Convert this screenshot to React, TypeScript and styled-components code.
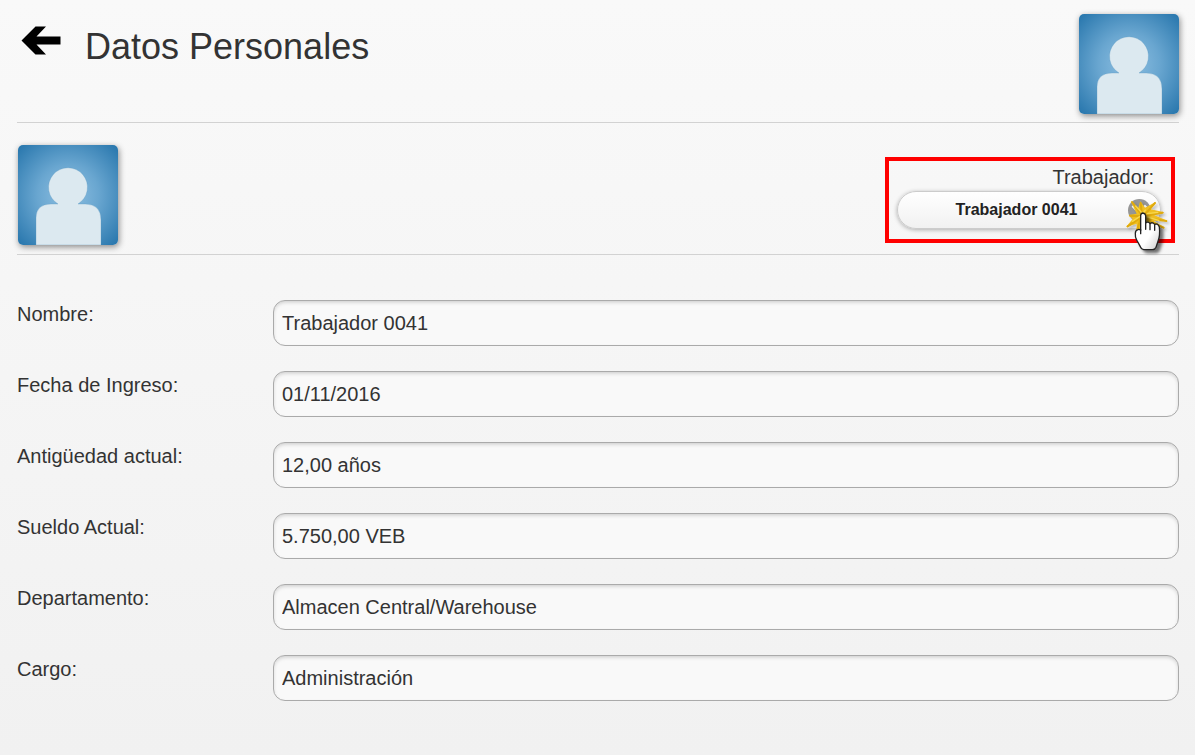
import React from "react";
import styled, { createGlobalStyle } from "styled-components";

const GlobalStyle = createGlobalStyle`
  * { box-sizing: border-box; }
  html { min-height: 100%; }
  body {
    margin: 0;
    min-height: 100vh;
    color: #333;
    background: linear-gradient(#f9f9f9, #f1f1f1);
    font: 20px/24px "Liberation Sans", Arial, sans-serif;
  }
`;

const Page = styled.main`
  padding: 14px 16px 24px 17px;
`;

const Header = styled.header`
  display: flex;
  align-items: flex-start;
  padding-bottom: 8px;
  border-bottom: 1px solid #d2d2d2;
`;

const BackButton = styled.button`
  display: flex;
  width: 68px;
  padding: 12px 0 0 4px;
  border: 0;
  background: none;
  cursor: pointer;
`;

const Title = styled.h1`
  flex: 1;
  margin: 12px 0 0;
  font-size: 36px;
  line-height: 42px;
  font-weight: normal;
`;

const AvatarSvg = styled.svg`
  display: block;
  flex: none;
  width: 100px;
  height: 100px;
  border-radius: 5px;
  box-shadow: 1px 2px 6px rgba(0, 0, 0, 0.45);
`;

const WorkerBar = styled.section`
  display: flex;
  justify-content: space-between;
  align-items: flex-start;
  padding: 12px 4px 9px 1px;
  border-bottom: 1px solid #d2d2d2;

  > ${AvatarSvg} {
    margin-top: 10px;
  }
`;

const WorkerPicker = styled.div`
  display: flex;
  flex-direction: column;
  width: 290px;
  margin-top: 22px;
  padding: 4px 10px 10px 8px;
  border: 4px solid #f00;
`;

const PickerLabel = styled.label`
  padding-right: 7px;
  text-align: right;
`;

const SelectWrap = styled.div`
  position: relative;
  display: flex;
  margin-top: 2px;
`;

const Select = styled.select`
  appearance: none;
  width: 100%;
  height: 38px;
  padding: 0 25px 0 0;
  border: 1px solid #ccc;
  border-radius: 19px;
  background: linear-gradient(#fff, #f1f1f1);
  box-shadow: 0 1px 4px rgba(0, 0, 0, 0.3);
  color: #222;
  font: bold 16px/20px "Liberation Sans", Arial, sans-serif;
  text-align: center;
  text-align-last: center;
`;

const Pointer = styled.svg`
  position: absolute;
  top: -6px;
  right: -19px;
  width: 70px;
  height: 75px;
  pointer-events: none;
`;

const Form = styled.form`
  display: flex;
  flex-direction: column;
  gap: 25px;
  margin-top: 45px;
`;

const Row = styled.div`
  display: flex;
  align-items: flex-start;
`;

const FieldLabel = styled.label`
  flex: none;
  width: 256px;
  padding-top: 2px;
`;

const Field = styled.input`
  flex: 1;
  min-width: 0;
  height: 46px;
  padding: 0 8px;
  border: 1px solid #aaa;
  border-radius: 12px;
  outline: 0;
  background: #f9f9f9;
  box-shadow: inset 0 2px 4px -1px rgba(0, 0, 0, 0.2);
  color: #333;
  font: inherit;
`;

function Avatar({ id }: { id: string }) {
  return (
    <AvatarSvg viewBox="0 0 100 100" role="img" aria-label="Foto del trabajador">
      <defs>
        <radialGradient id={id} cx="50%" cy="50%" r="68%">
          <stop offset="0" stopColor="#8fc0e2" />
          <stop offset="0.45" stopColor="#69a6d0" />
          <stop offset="1" stopColor="#2a78ae" />
        </radialGradient>
      </defs>
      <rect width="100" height="100" fill={`url(#${id})`} />
      <path
        d="M18 100V73Q18 59 33 59H40A19.5 19.5 0 1 1 60 59H67Q83 59 83 75V100Z"
        fill="#dce9f0"
        stroke="#5c98c0"
        strokeOpacity="0.5"
        strokeWidth="0.6"
      />
    </AvatarSvg>
  );
}

function ClickPointer() {
  return (
    <Pointer viewBox="0 0 210 225" aria-hidden="true">
      <defs>
        <filter id="handShadow" x="-30%" y="-30%" width="180%" height="180%">
          <feDropShadow dx="10" dy="9" stdDeviation="5" floodOpacity="0.55" />
        </filter>
        <filter id="burstShadow" x="-30%" y="-30%" width="180%" height="180%">
          <feDropShadow dx="6" dy="6" stdDeviation="4" floodOpacity="0.25" />
        </filter>
        <linearGradient id="handFill" x1="0" y1="0" x2="1" y2="1">
          <stop offset="0.6" stopColor="#fff" />
          <stop offset="1" stopColor="#ccc" />
        </linearGradient>
      </defs>
      <circle cx="88" cy="76" r="34" fill="#969696" />
      <path d="M68 62L88 82L108 62" fill="none" stroke="#fff" strokeWidth="9" />
      <g filter="url(#burstShadow)">
        <path
          d="M62 48L85 69L91 49L105 68L138 50L122 73L163 82L130 89L172 107L130 107L164 131L118 116L128 134L101 116L80 145L80 116L48 126L68 102L56 90L80 86Z"
          fill="#efbe20"
        />
        <path
          d="M66 51L96 91L92 54M105 88L135 54M106 92L158 83M108 100L169 108M106 100L161 128M92 98L53 124M92 101L80 140M60 92L88 94"
          fill="none"
          stroke="#e0aa0c"
          strokeWidth="6"
          strokeLinecap="round"
        />
        <path
          d="M76 62L98 86L107 74M110 86L145 82M112 96L148 107M90 94L66 110"
          fill="none"
          stroke="#f8d94f"
          strokeWidth="4"
        />
      </g>
      <path
        filter="url(#handShadow)"
        d="M92 136V91Q93 84 99 84Q106 85 107 92V114Q114 108 120 116Q127 110 134 118Q144 114 148 126Q151 151 144 169L138 187Q135 194 127 194H101Q94 193 91 185L80 165Q75 158 76 145Q76 136 84 134Q88 132 92 136Z"
        fill="url(#handFill)"
        stroke="#222"
        strokeWidth="4"
        strokeLinejoin="round"
      />
      <path
        d="M107 113V133M120 117V134M134 120V136M92 134V146"
        fill="none"
        stroke="#222"
        strokeWidth="4"
        strokeLinecap="round"
      />
    </Pointer>
  );
}

const fields = [
  { id: "nombre", label: "Nombre:", value: "Trabajador 0041" },
  { id: "ingreso", label: "Fecha de Ingreso:", value: "01/11/2016" },
  { id: "antiguedad", label: "Antigüedad actual:", value: "12,00 años" },
  { id: "sueldo", label: "Sueldo Actual:", value: "5.750,00 VEB" },
  { id: "departamento", label: "Departamento:", value: "Almacen Central/Warehouse" },
  { id: "cargo", label: "Cargo:", value: "Administración" },
];

export default function App() {
  return (
    <>
      <GlobalStyle />
      <Page>
        <Header>
          <BackButton type="button" aria-label="Volver">
            <svg width="40" height="30" viewBox="0 0 40 30" aria-hidden="true">
              <path d="M0.500 14.500L14.500 0.500H25L15.500 10.500H39.500V18.500H15.500L25 28.500H14.500Z" fill="#000" />
            </svg>
          </BackButton>
          <Title>Datos Personales</Title>
          <Avatar id="headerAvatar" />
        </Header>
        <WorkerBar>
          <Avatar id="workerAvatar" />
          <WorkerPicker>
            <PickerLabel htmlFor="trabajador">Trabajador:</PickerLabel>
            <SelectWrap>
              <Select id="trabajador" defaultValue="0041">
                <option value="0041">Trabajador 0041</option>
              </Select>
              <ClickPointer />
            </SelectWrap>
          </WorkerPicker>
        </WorkerBar>
        <Form>
          {fields.map((f) => (
            <Row key={f.id}>
              <FieldLabel htmlFor={f.id}>{f.label}</FieldLabel>
              <Field id={f.id} type="text" defaultValue={f.value} readOnly />
            </Row>
          ))}
        </Form>
      </Page>
    </>
  );
}
